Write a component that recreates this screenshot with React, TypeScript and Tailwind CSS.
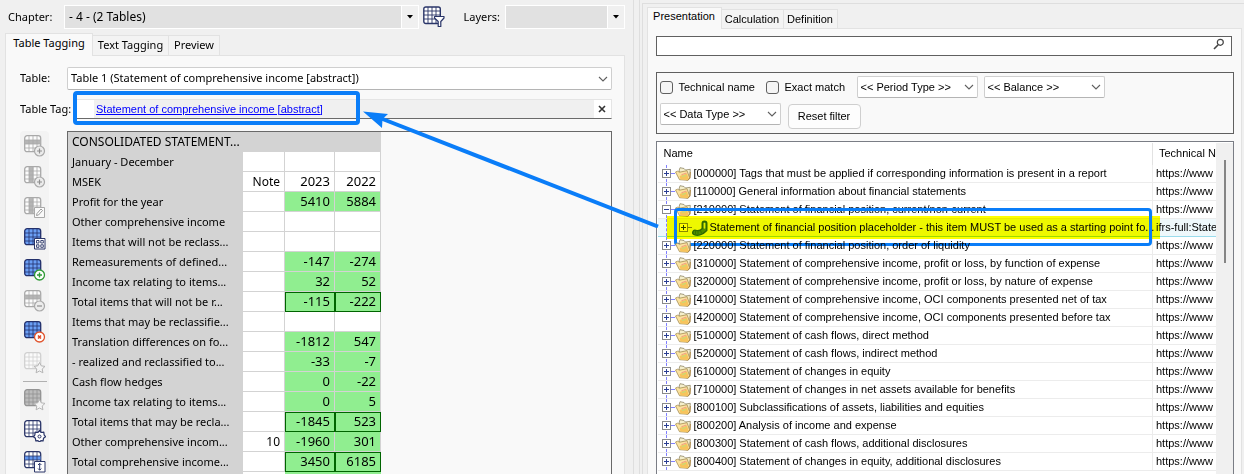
import type { ReactNode } from 'react';

type Tone = 'gray' | 'blue' | 'faint' | 'solid' | 'outline' | 'row';
type Badge = 'plus' | 'green' | 'minus' | 'cross' | 'edit' | 'cells' | 'star' | 'gear' | 'resize';

interface TableRow {
  label: string;
  note?: string;
  y2023?: string;
  y2022?: string;
  tagged?: boolean;
  total?: boolean;
}

interface Concept {
  name: string;
  tech: string;
  open?: boolean;
  child?: boolean;
}

const statement: TableRow[] = [
  { label: 'January - December' },
  { label: 'MSEK', note: 'Note', y2023: '2023', y2022: '2022' },
  { label: 'Profit for the year', y2023: '5410', y2022: '5884', tagged: true },
  { label: 'Other comprehensive income' },
  { label: 'Items that will not be reclass...' },
  { label: 'Remeasurements of defined...', y2023: '-147', y2022: '-274', tagged: true },
  { label: 'Income tax relating to items...', y2023: '32', y2022: '52', tagged: true },
  { label: 'Total items that will not be r...', y2023: '-115', y2022: '-222', tagged: true, total: true },
  { label: 'Items that may be reclassifie...' },
  { label: 'Translation differences on fo...', y2023: '-1812', y2022: '547', tagged: true },
  { label: '- realized and reclassified to...', y2023: '-33', y2022: '-7', tagged: true },
  { label: 'Cash flow hedges', y2023: '0', y2022: '-22', tagged: true },
  { label: 'Income tax relating to items...', y2023: '0', y2022: '5', tagged: true },
  { label: 'Total items that may be recla...', y2023: '-1845', y2022: '523', tagged: true, total: true },
  { label: 'Other comprehensive incom...', note: '10', y2023: '-1960', y2022: '301', tagged: true },
  { label: 'Total comprehensive income...', y2023: '3450', y2022: '6185', tagged: true, total: true },
];

const concepts: Concept[] = [
  { name: '[000000] Tags that must be applied if corresponding information is present in a report', tech: 'https://www' },
  { name: '[110000] General information about financial statements', tech: 'https://www' },
  { name: '[210000] Statement of financial position, current/non-current', tech: 'https://www', open: true },
  { name: 'Statement of financial position placeholder - this item MUST be used as a starting point fo...', tech: 'ifrs-full:State', child: true },
  { name: '[220000] Statement of financial position, order of liquidity', tech: 'https://www' },
  { name: '[310000] Statement of comprehensive income, profit or loss, by function of expense', tech: 'https://www' },
  { name: '[320000] Statement of comprehensive income, profit or loss, by nature of expense', tech: 'https://www' },
  { name: '[410000] Statement of comprehensive income, OCI components presented net of tax', tech: 'https://www' },
  { name: '[420000] Statement of comprehensive income, OCI components presented before tax', tech: 'https://www' },
  { name: '[510000] Statement of cash flows, direct method', tech: 'https://www' },
  { name: '[520000] Statement of cash flows, indirect method', tech: 'https://www' },
  { name: '[610000] Statement of changes in equity', tech: 'https://www' },
  { name: '[710000] Statement of changes in net assets available for benefits', tech: 'https://www' },
  { name: '[800100] Subclassifications of assets, liabilities and equities', tech: 'https://www' },
  { name: '[800200] Analysis of income and expense', tech: 'https://www' },
  { name: '[800300] Statement of cash flows, additional disclosures', tech: 'https://www' },
  { name: '[800400] Statement of changes in equity, additional disclosures', tech: 'https://www' },
];

const tools: { title: string; tone: Tone; badge: Badge }[] = [
  { title: 'Add row', tone: 'row', badge: 'plus' },
  { title: 'Add column', tone: 'gray', badge: 'plus' },
  { title: 'Edit column', tone: 'gray', badge: 'edit' },
  { title: 'Tag cells', tone: 'blue', badge: 'cells' },
  { title: 'Add table', tone: 'blue', badge: 'green' },
  { title: 'Remove row', tone: 'row', badge: 'minus' },
  { title: 'Remove table', tone: 'blue', badge: 'cross' },
  { title: 'Favourite', tone: 'faint', badge: 'star' },
];

const moreTools: { title: string; tone: Tone; badge: Badge }[] = [
  { title: 'Favourite table', tone: 'solid', badge: 'star' },
  { title: 'Table settings', tone: 'outline', badge: 'gear' },
  { title: 'Row height', tone: 'outline', badge: 'resize' },
];

const palette: Record<Tone, { fill: string; line: string }> = {
  gray: { fill: '#fbfbfb', line: '#a9a9a9' },
  row: { fill: '#fbfbfb', line: '#a9a9a9' },
  blue: { fill: '#6a9ff5', line: '#23306b' },
  faint: { fill: '#fafafa', line: '#d0d0d0' },
  solid: { fill: '#bcbcbc', line: '#939393' },
  outline: { fill: '#ffffff', line: '#2a3568' },
};

const starPath = 'M15.5 10.5l1.7 3.3 3.8.6-2.8 2.6.7 3.8-3.4-1.8-3.4 1.8.7-3.8-2.8-2.6 3.8-.6z';

function BadgeMark({ badge }: { badge: Badge }) {
  switch (badge) {
    case 'plus':
    case 'minus':
      return (
        <>
          <circle cx="15.5" cy="16" r="5" fill="#ececec" stroke="#a9a9a9" strokeWidth="1.2" />
          <path d={badge === 'plus' ? 'M13 16h5M15.5 13.5v5' : 'M13 16h5'} stroke="#8f8f8f" strokeWidth="1.2" />
        </>
      );
    case 'green':
      return (
        <>
          <circle cx="15.5" cy="16" r="5" fill="#fff" stroke="#2f9a36" strokeWidth="1.3" />
          <path d="M13 16h5M15.5 13.5v5" stroke="#2f9a36" strokeWidth="1.4" />
        </>
      );
    case 'cross':
      return (
        <>
          <circle cx="15.5" cy="16" r="5" fill="#fff" stroke="#e0532c" strokeWidth="1.3" />
          <path d="M14 14.5l3 3M17 14.5l-3 3" stroke="#e0431c" strokeWidth="1.5" />
        </>
      );
    case 'edit':
      return (
        <>
          <path d="M10.5 10.5h10v10h-10z" fill="#fafafa" stroke="#a9a9a9" />
          <path d="M12.5 18.5l.5-2 4-4.5 1.500 1.500-4 4.500z" fill="#fff" stroke="#9a9a9a" />
        </>
      );
    case 'cells':
      return (
        <>
          <path d="M10.5 10.5h10.500v10.500h-10.500z" fill="#fff" stroke="#2a3568" />
          <path d="M12.500 12.500h2.500v2.500h-2.500zM16.800 12.500h2.500v2.500h-2.500zM12.500 16.800h2.500v2.500h-2.500zM16.800 16.800h2.500v2.500h-2.500z" fill="none" stroke="#2a3568" strokeWidth=".9" />
        </>
      );
    case 'star':
      return <path d={starPath} fill="#f4f4f4" stroke="#b5b5b5" strokeLinejoin="round" />;
    case 'gear':
      return (
        <>
          <path d="M15.500 10.500l1.700 2 2.600-.4.3 2.700 1.400 1.900-2 1.600-.4 2.600-2.200-.2-1.400 1.300-1.500-1.300-2.200.2-.4-2.600-1.800-1.600 1.300-1.900.3-2.700 2.600.4z" fill="#fff" stroke="#2a3568" strokeWidth="1.200" strokeLinejoin="round" />
          <circle cx="15.500" cy="16.500" r="1.500" fill="none" stroke="#2a3568" />
        </>
      );
    case 'resize':
      return (
        <>
          <path d="M10.500 10.500h10.500v10.500h-10.500z" fill="#fff" stroke="#2a3568" />
          <path d="M15.700 12.500v6.500M14 14l1.700-1.700 1.700 1.700M14 17.500l1.700 1.700 1.700-1.700" fill="none" stroke="#2a3568" />
        </>
      );
  }
}

function GridIcon({ tone, badge }: { tone: Tone; badge: Badge }) {
  const { fill, line } = palette[tone];
  return (
    <svg viewBox="0 0 22 22" className="size-[22px]" aria-hidden="true">
      <rect x=".7" y=".7" width="16" height="16" rx="2.5" fill={fill} stroke={line} strokeWidth="1.3" />
      {tone === 'row' && <path d="M1 5h15.500v4H1z" fill="#b5b5b5" />}
      {tone === 'gray' && <path d="M5 1h4.500v15.500H5z" fill="#b5b5b5" />}
      {badge === 'resize' && <path d="M1 5h15.500v4H1z" fill="#6196ee" />}
      <path d="M5 1v15.500M9 1v15.500M13 1v15.500M1 5h15.500M1 9h15.500M1 13h15.500" stroke={line} strokeWidth=".8" fill="none" />
      <BadgeMark badge={badge} />
    </svg>
  );
}

function FilterGridIcon() {
  return (
    <svg viewBox="0 0 22 22" className="size-[22px]" aria-hidden="true">
      <rect x=".8" y="1" width="16.500" height="16.500" rx="2" fill="#fff" stroke="#2a3568" strokeWidth="1.400" />
      <path d="M5 1v16.500M9 1v16.500M13 1v16.500M1 5h16M1 9h16M1 13h16" stroke="#2a3568" strokeWidth=".9" />
      <path d="M11.500 10.500h9.500v1.500l-3.200 3.500v5h-2.600v-5L11.500 12z" fill="#fff" stroke="#2a3568" strokeWidth="1.200" strokeLinejoin="round" />
    </svg>
  );
}

function FolderIcon() {
  return (
    <svg viewBox="0 0 16 14" className="h-3.5 w-4 shrink-0" aria-hidden="true">
      <path d="M4 4l1-3.300 4 .8L10.500 3l4.800-.7-.6 9L11 13z" fill="#f5efcb" stroke="#8f8766" strokeWidth=".8" strokeLinejoin="round" />
      <path d="M.5 5l2-.8 2 1 7.500-1.500 2.500 6.800L13 13.300l-8.500-.6z" fill="#fbe3a0" stroke="#a48b50" strokeWidth=".8" strokeLinejoin="round" />
      <path d="M4.500 9l7.500-2.500 1.500 5-1 1.500-7-.5z" fill="#f7c45c" />
      <path d="M6.500 7.700l5-1.700" stroke="#f0a184" strokeWidth="1.200" />
      <path d="M7 9.500l4-1" stroke="#bfe07c" />
      <path d="M13 13.300L15 11l.4-6" fill="none" stroke="#b0843a" strokeWidth=".9" />
    </svg>
  );
}

function ConceptIcon() {
  return (
    <svg viewBox="0 0 17 16" className="h-4 w-[17px] shrink-0" aria-hidden="true">
      <path d="M3 12.500c3 1.200 7-.3 9.500-3V3.500" fill="none" stroke="#2f6a1c" strokeWidth="6" strokeLinecap="round" />
      <path d="M3 12.500c3 1.200 7-.3 9.500-3V3.500" fill="none" stroke="#4f8d28" strokeWidth="3" strokeLinecap="round" />
      <path d="M12.500 3.500v4.500" stroke="#e4f05a" strokeWidth="1.600" strokeLinecap="round" />
      <path d="M3.500 11v3M6 11.500v2.500M8.500 10.500l1 2.500" stroke="#2f6a1c" strokeWidth=".8" />
    </svg>
  );
}

function Chevron() {
  return (
    <svg viewBox="0 0 10 6" className="pointer-events-none absolute right-1 h-1.5 w-2.5" aria-hidden="true">
      <path d="M1 1l4 4 4-4" fill="none" stroke="#606060" strokeWidth="1.100" />
    </svg>
  );
}

function Picker({ label, value, className }: { label: string; value: string; className: string }) {
  return (
    <div className={`relative flex items-center ${className}`}>
      <select aria-label={label} className="size-full appearance-none rounded-xs border border-[#cfcfcf] border-b-[#b4b4b4] bg-white pl-[3px] pr-4">
        <option>{value}</option>
      </select>
      <Chevron />
    </div>
  );
}

function FlatPicker({ id, value, className }: { id: string; value: string; className: string }) {
  return (
    <div className={`relative flex h-6 items-center ${className}`}>
      <select id={id} className="size-full appearance-none border border-white bg-[#e1e1e1] pl-1 pr-5 text-[12px]">
        <option>{value}</option>
      </select>
      <span className="pointer-events-none absolute inset-y-0 right-0 flex w-[18px] items-center justify-center border border-white bg-[#f0f0f0]">
        <svg viewBox="0 0 6 4" className="h-1 w-1.5" aria-hidden="true"><path d="M0 0h6L3 3.500z" /></svg>
      </span>
    </div>
  );
}

function Tab({ active, className, children }: { active?: boolean; className: string; children: ReactNode }) {
  return (
    <button
      role="tab"
      aria-selected={!!active}
      className={`whitespace-nowrap border border-b-0 border-[#e2e2e2] ${active ? '-mb-px bg-[#f9f9f9]' : 'border-l-0 bg-[#f3f3f3]'} ${className}`}
    >
      {children}
    </button>
  );
}

function ValueCell({ row, value }: { row: TableRow; value?: string }) {
  const fill = row.tagged ? 'bg-[#90ee90]' : 'bg-white';
  const edge = row.total ? 'outline outline-1 -outline-offset-1 outline-[#006400]' : '';
  return (
    <td className={`h-5 border-b border-r border-[#d3d3d3] p-0 pr-1 text-right text-[13px] leading-[19px] ${fill} ${edge}`}>{value}</td>
  );
}

function StatementTable() {
  return (
    <table className="w-[313px] table-fixed border-separate border-spacing-0">
      <colgroup>
        <col className="w-[175px]" />
        <col className="w-[42px]" />
        <col className="w-[50px]" />
        <col className="w-[46px]" />
      </colgroup>
      <tbody>
        <tr>
          <th colSpan={4} className="h-5 bg-[#d3d3d3] p-0 pl-1 text-left text-[12px] font-normal leading-5">CONSOLIDATED STATEMENT...</th>
        </tr>
        {statement.map((row, i) => (
          <tr key={i}>
            <th className="h-5 whitespace-nowrap bg-[#d3d3d3] p-0 pl-1 text-left font-normal leading-5">{row.label}</th>
            <td className="h-5 border-b border-r border-[#d3d3d3] bg-white p-0 pr-1 text-right text-[12px] leading-[19px]">{row.note}</td>
            <ValueCell row={row} value={row.y2023} />
            <ValueCell row={row} value={row.y2022} />
          </tr>
        ))}
        <tr>
          <th className="h-5 bg-[#d3d3d3]" />
          <td className="bg-white" />
          <td className="bg-[#90ee90]" />
          <td className="bg-[#90ee90]" />
        </tr>
      </tbody>
    </table>
  );
}

function TaggingPane() {
  return (
    <section className="flex min-w-0 flex-[619] flex-col pl-[5px] pr-2 pt-[5px] font-['Noto_Sans','Open_Sans',sans-serif] text-[11px]">
      <div className="flex h-6 items-center">
        <label htmlFor="chapter" className="w-[59px] pl-[3px]">Chapter:</label>
        <FlatPicker id="chapter" value="- 4 - (2 Tables)" className="min-w-0 flex-1" />
        <button title="Filter tables" className="ml-1"><FilterGridIcon /></button>
        <label htmlFor="layers" className="ml-[19px] w-[41px]">Layers:</label>
        <FlatPicker id="layers" value="" className="w-[120px]" />
      </div>
      <div role="tablist" className="mt-1 flex h-[22px] items-end">
        <Tab active className="z-10 h-[23px] w-[88px] pb-1">Table Tagging</Tab>
        <Tab className="h-5 w-[76px]">Text Tagging</Tab>
        <Tab className="h-5 w-[51px]">Preview</Tab>
      </div>
      <div className="flex flex-1 flex-col border border-b-0 border-[#e2e2e2] bg-[#f9f9f9] pl-3.5 pr-3 pt-[11px]">
        <div className="flex items-center">
          <span className="w-[47px]">Table:</span>
          <Picker label="Table" value="Table 1 (Statement of comprehensive income [abstract])" className="h-[23px] min-w-0 flex-1" />
        </div>
        <div className="relative mt-[9px] flex h-5 items-center">
          <span className="w-[57px] whitespace-nowrap">Table Tag:</span>
          <div className="flex h-5 min-w-0 flex-1 items-center border border-b-[#6a6a6a] border-l-0 border-r-[#e5e5e5] border-t-[#e5e5e5] bg-[#f0f0f0]">
            <div className="h-full w-[17px] bg-white" />
            <a href="#tag" className="ml-0.5 whitespace-nowrap font-['Liberation_Sans',Arial,sans-serif] text-[11px] leading-[13px] text-[#0000ff] underline">
              Statement of comprehensive income [abstract]
            </a>
            <button title="Clear tag" className="ml-auto flex h-full w-[17px] items-center justify-center bg-white">
              <svg viewBox="0 0 8 8" className="size-2" aria-hidden="true"><path d="M1 1l6 6M7 1L1 7" stroke="#333" strokeWidth="1.600" /></svg>
            </button>
          </div>
          <div className="pointer-events-none absolute -top-2 left-[53px] h-[34px] w-[287px] rounded-sm border-4 border-[#0a7df8]" />
        </div>
        <div className="mt-3 flex flex-1 items-stretch">
          <div role="toolbar" aria-label="Table tools" className="mr-[18px] flex w-[29px] flex-col items-center gap-[9px] rounded-sm bg-[#f3f3f3] pt-1">
            {tools.map((t) => (
              <button key={t.title} title={t.title}><GridIcon tone={t.tone} badge={t.badge} /></button>
            ))}
            <hr className="-my-0.5 w-6 border-[#b0b0b0]" />
            {moreTools.map((t) => (
              <button key={t.title} title={t.title}><GridIcon tone={t.tone} badge={t.badge} /></button>
            ))}
          </div>
          <div className="flex-1 border border-b-0 border-[#696969]">
            <StatementTable />
          </div>
        </div>
      </div>
    </section>
  );
}

function ConceptRow({ concept }: { concept: Concept }) {
  const { name, tech, open, child } = concept;
  return (
    <tr className={child ? 'bg-[#eef8fb]' : ''}>
      <td className={`h-[18px] border-b border-r p-0 ${child ? 'border-b-[#9adcec] border-r-[#e8e8e8]' : 'border-[#ececec]'}`}>
        <div className="relative flex h-[17px] items-center pl-1">
          <span className="absolute inset-y-0 left-2 border-l border-dashed border-[#8080ff]" />
          <button
            aria-label={open ? 'Collapse' : 'Expand'}
            className={`relative flex size-[9px] shrink-0 items-center justify-center border border-[#8a8a8a] bg-white ${child ? 'ml-[17px]' : ''}`}
          >
            <svg viewBox="0 0 5 5" className="size-[5px] shrink-0" aria-hidden="true">
              <path d={open ? 'M0 2.500h5' : 'M0 2.500h5M2.500 0v5'} stroke="#2b3f93" />
            </svg>
          </button>
          <span className="w-1 shrink-0 border-t border-[#8080ff]" />
          {child ? <ConceptIcon /> : <FolderIcon />}
          <span className={`whitespace-nowrap ${child ? 'ml-px' : 'ml-[3px]'}`}>{name}</span>
          {child && (
            <>
              <span className="pointer-events-none absolute -top-[3px] -right-2 left-[9px] h-[23px] bg-[#ffff00] mix-blend-multiply" />
              <span className="pointer-events-none absolute -top-[11px] right-0 left-4 h-[38px] rounded-sm border-[3px] border-[#0a7df8]" />
            </>
          )}
        </div>
      </td>
      <td className={`overflow-hidden whitespace-nowrap border-b p-0 pl-[3px] ${child ? 'border-b-[#9adcec]' : 'border-b-[#ececec]'}`}>{tech}</td>
    </tr>
  );
}

function TaxonomyPane() {
  return (
    <section className="flex min-w-0 flex-[602] flex-col border-l border-[#dedede] pl-0.5 pt-[3px] font-['Liberation_Sans',Arial,sans-serif] text-[11px]">
      <div className="flex flex-1 flex-col border-l border-t border-[#dedede] pl-1 pr-0.5 pt-[3px]">
        <div role="tablist" className="flex h-[21px] items-end">
          <Tab active className="z-10 h-[22px] w-[75px] pb-1">Presentation</Tab>
          <Tab className="h-[19px] w-[62px]">Calculation</Tab>
          <Tab className="h-[19px] w-[54px]">Definition</Tab>
        </div>
        <div className="flex flex-1 flex-col border border-b-0 border-[#e2e2e2] bg-[#f9f9f9] pl-2 pr-[7px] pt-[7px]">
          <div className="mr-0.5 flex h-5 border border-[#606060] bg-white">
            <input type="search" aria-label="Search concepts" className="min-w-0 flex-1 px-1 outline-none" />
            <button title="Search" className="mr-1 flex w-4 items-center justify-center">
              <svg viewBox="0 0 12 12" className="mb-1 size-3" aria-hidden="true">
                <circle cx="7.300" cy="4.300" r="3" fill="none" stroke="#444" strokeWidth="1.200" />
                <path d="M5.200 6.700L1 11" stroke="#444" strokeWidth="1.600" />
              </svg>
            </button>
          </div>
          <div className="mt-4 flex h-[62px] flex-wrap content-start items-center gap-y-[5px] border border-[#606060] pl-[3px] pt-[3px]">
            <label className="flex w-[106px] items-center gap-1.5 whitespace-nowrap">
              <input type="checkbox" className="size-[13px] appearance-none rounded-[3px] border border-[#606060] bg-[#f5f5f5]" />
              Technical name
            </label>
            <label className="flex w-[91px] items-center gap-1.5 whitespace-nowrap">
              <input type="checkbox" className="size-[13px] appearance-none rounded-[3px] border border-[#606060] bg-[#f5f5f5]" />
              Exact match
            </label>
            <Picker label="Period type" value="<< Period Type >>" className="mr-1.5 h-[22px] w-[121px]" />
            <Picker label="Balance" value="<< Balance >>" className="h-[22px] w-[121px]" />
            <div className="flex w-full items-start">
              <Picker label="Data type" value="<< Data Type >>" className="mr-[7px] h-[22px] w-[121px]" />
              <button className="mt-px h-[25px] w-[73px] rounded-sm border border-[#cfcfcf] bg-[#fdfdfd]">Reset filter</button>
            </div>
          </div>
          <div className="mt-[7px] flex flex-1 border border-b-0 border-[#7a7d85] bg-white pl-px pt-px">
            <div className="min-w-0 flex-1">
              <table className="w-full table-fixed border-separate border-spacing-0">
                <colgroup>
                  <col />
                  <col className="w-[63px]" />
                </colgroup>
                <thead>
                  <tr>
                    <th className="h-[22px] border-r border-[#e2e2e2] p-0 pb-0.5 pl-1.5 text-left font-normal">Name</th>
                    <th className="overflow-hidden whitespace-nowrap p-0 pb-0.5 pl-1.5 text-left font-normal">Technical N</th>
                  </tr>
                </thead>
                <tbody>
                  {concepts.map((c) => <ConceptRow key={c.name} concept={c} />)}
                </tbody>
              </table>
            </div>
            <div className="w-[17px] bg-[#f0f0f0] pt-[17px]">
              <div className="mx-auto h-[103px] w-0.5 bg-[#858585]" />
            </div>
          </div>
        </div>
      </div>
    </section>
  );
}

export default function App() {
  return (
    <main className="relative flex h-screen overflow-hidden bg-[#f0f0f0] text-black">
      <TaggingPane />
      <div role="separator" className="w-1.5 border-l border-[#dedede]" />
      <TaxonomyPane />
      <svg viewBox="0 0 300 120" className="pointer-events-none absolute left-[360px] top-[108px] h-[120px] w-[300px]" aria-hidden="true">
        <path d="M298 118.500L20 10" stroke="#0a7df8" strokeWidth="4" />
        <path d="M3 3.500l25 2.500-5.500 5-.5 9z" fill="#0a7df8" />
      </svg>
    </main>
  );
}
